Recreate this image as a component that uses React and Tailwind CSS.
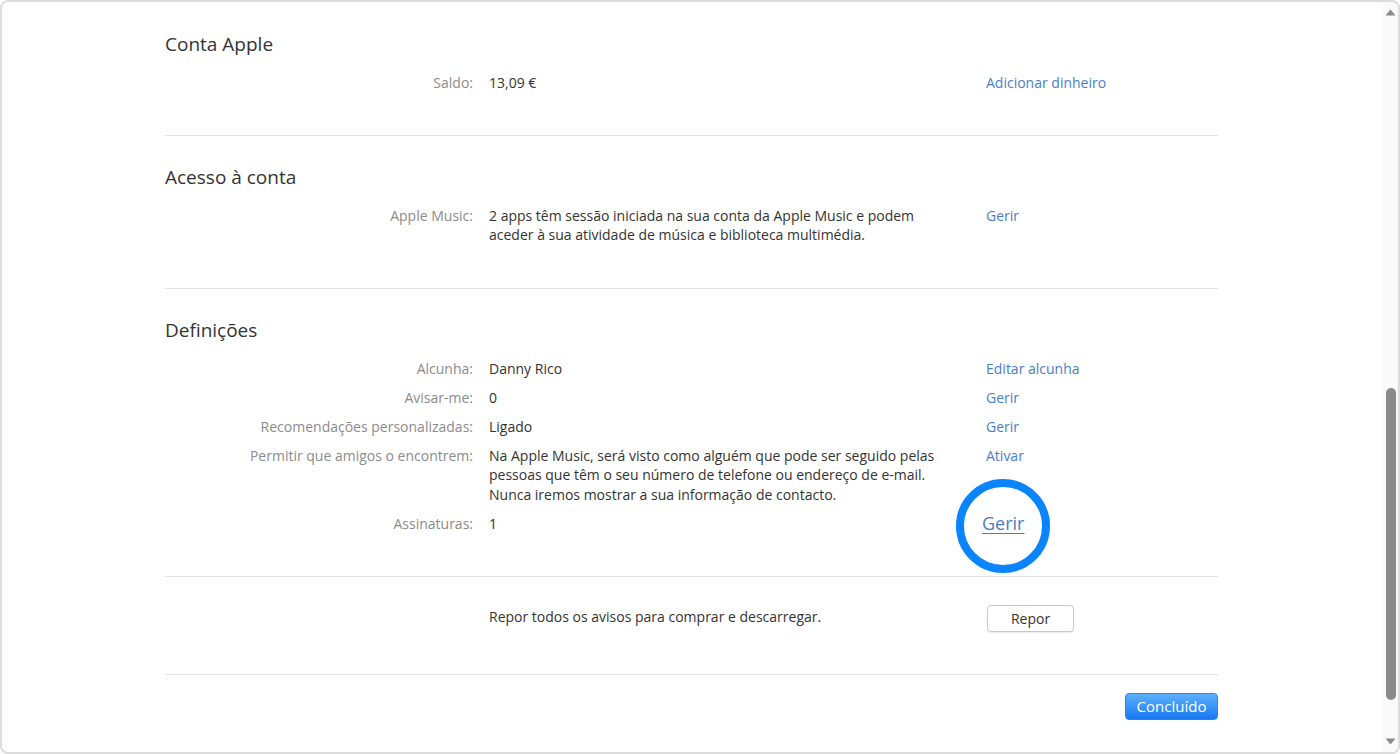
import React from "react";

const FONT = { fontFamily: '"Open Sans", "Noto Sans", "Liberation Sans", sans-serif' };

function Row({ label, children, action }) {
  return (
    <div className="grid grid-cols-[308px_481px_232px] gap-x-4 text-[14px] leading-[19.5px]">
      <div className="text-right text-[#8b8b8b]">{label}</div>
      <div className="text-[#333]">{children}</div>
      <div>{action}</div>
    </div>
  );
}

function Link({ children }) {
  return <span className="text-[#4a7dc9]">{children}</span>;
}

function Heading({ children }) {
  return <h2 className="text-[19px] leading-[24px] text-[#333] mb-[17px]">{children}</h2>;
}

export default function App() {
  return (
    <div className="w-[1400px] h-[754px] bg-white" style={FONT}>
      <div className="w-full h-full border-2 border-[#dcdcdc] rounded-[8px] overflow-hidden flex">
        <div className="flex-1 pl-[163px] pr-[163px]">
          <div className="w-[1053px]">
            <section className="pt-[30px] pb-[42px] border-b border-[#e3e3e3]">
              <Heading>Conta Apple</Heading>
              <Row label="Saldo:" action={<Link>Adicionar dinheiro</Link>}>13,09 €</Row>
            </section>
            <section className="pt-[29px] pb-[43px] border-b border-[#e3e3e3]">
              <Heading>Acesso à conta</Heading>
              <Row label="Apple Music:" action={<Link>Gerir</Link>}>
                2 apps têm sessão iniciada na sua conta da Apple Music e podem
                <br />
                aceder à sua atividade de música e biblioteca multimédia.
              </Row>
            </section>
            <section className="pt-[29px] pb-[42px] border-b border-[#e3e3e3]">
              <Heading>Definições</Heading>
              <div className="flex flex-col gap-y-[9.5px]">
                <Row label="Alcunha:" action={<Link>Editar alcunha</Link>}>Danny Rico</Row>
                <Row label="Avisar-me:" action={<Link>Gerir</Link>}>0</Row>
                <Row label="Recomendações personalizadas:" action={<Link>Gerir</Link>}>Ligado</Row>
                <Row label="Permitir que amigos o encontrem:" action={<Link>Ativar</Link>}>
                  Na Apple Music, será visto como alguém que pode ser seguido pelas
                  <br />
                  pessoas que têm o seu número de telefone ou endereço de e-mail.
                  <br />
                  Nunca iremos mostrar a sua informação de contacto.
                </Row>
                <Row
                  label="Assinaturas:"
                  action={
                    <span className="relative inline-block ml-[-4px]">
                      <span className="text-[18px] leading-[19.5px] underline underline-offset-[3px] text-[#4a7dc9]">Gerir</span>
                      <span className="absolute left-1/2 top-1/2 -translate-x-1/2 -translate-y-1/2 mt-[2px] w-[94px] h-[94px] rounded-full border-[8px] border-[#0a84ff]"></span>
                    </span>
                  }
                >
                  1
                </Row>
              </div>
            </section>
            <section className="pt-[28px] pb-[42px] border-b border-[#e3e3e3]">
              <div className="grid grid-cols-[308px_481px_232px] gap-x-4 text-[14px] items-center">
                <div></div>
                <div className="text-[#333] leading-[19.5px] -mt-[4px]">Repor todos os avisos para comprar e descarregar.</div>
                <div>
                  <button className="w-[87px] h-[27px] ml-[1px] border border-[#c9c9c9] rounded-[4px] bg-white text-[#333] text-[14px] shadow-[0_1px_1px_rgba(0,0,0,0.08)]">
                    Repor
                  </button>
                </div>
              </div>
            </section>
            <div className="flex justify-end pt-[18px]">
              <button className="w-[93px] h-[27px] rounded-[4px] text-white text-[15px] bg-gradient-to-b from-[#5cb0fd] to-[#1478f4] border border-[#2d85ea]">
                Concluído
              </button>
            </div>
          </div>
        </div>
        <div className="w-[15px] bg-[#fafafa] relative flex flex-col items-center">
          <svg width="11" height="7" viewBox="0 0 11 7" className="mt-[7px]">
            <path d="M0.5 6.5 L5.5 0.5 L10.5 6.5 Z" fill="#8a8a8a" />
          </svg>
          <div className="flex-1 w-full flex flex-col items-center">
            <div className="mt-[372px] w-[10px] h-[312px] rounded-full bg-[#8a8a8a]"></div>
          </div>
          <svg width="11" height="7" viewBox="0 0 11 7" className="mb-[7px]">
            <path d="M0.5 0.5 L10.5 0.5 L5.5 6.5 Z" fill="#8a8a8a" />
          </svg>
        </div>
      </div>
    </div>
  );
}
